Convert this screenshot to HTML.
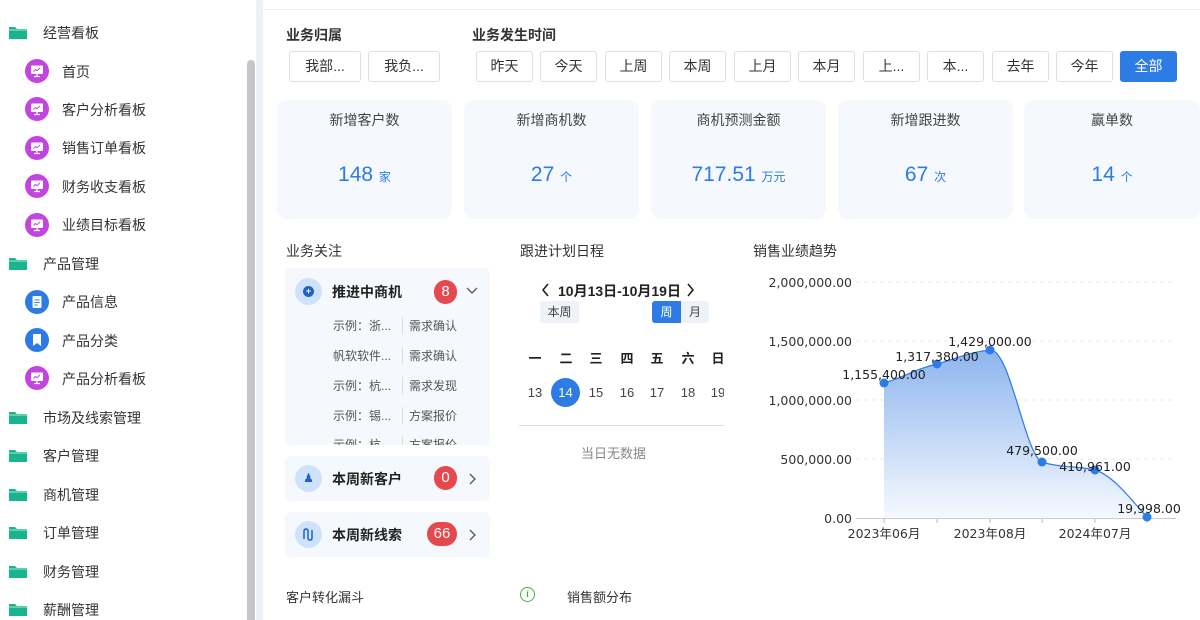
<!DOCTYPE html>
<html><head><meta charset="utf-8">
<style>
*{margin:0;padding:0;box-sizing:border-box}
body{width:1200px;height:620px;overflow:hidden;background:#fff;font-family:"Liberation Sans","Noto Sans CJK SC",sans-serif;color:#333;position:relative}
.a{position:absolute}
.side{left:0;top:0;width:256px;height:620px;background:#fff}
.mi{position:absolute;font-size:14px;color:#333;white-space:nowrap}
.fold{position:absolute;left:9px;width:18px;height:13px}
.ci{position:absolute;left:25px;width:24px;height:24px}
.btn{position:absolute;top:51px;height:31px;border:1px solid #dcdfe6;border-radius:3px;font-size:14px;color:#333;text-align:center;line-height:29px;background:#fff}
.card{position:absolute;top:100px;height:119px;background:#f5f8fd;border-radius:10px;text-align:center}
.card .t{margin-top:10px;font-size:14px;color:#444}
.card .v{margin-top:33px;font-size:21px;color:#2d7be5}
.card .v small{font-size:12px}
.h{position:absolute;font-size:14px;color:#333}
.box{position:absolute;left:285px;width:205px;background:#f5f8fd;border-radius:6px}
.badge{position:absolute;height:24px;border-radius:12px;background:#e5484d;color:#fff;font-size:15px;text-align:center;line-height:24px}
.row{position:absolute;font-size:12px;color:#555}
.dn{position:absolute;top:385px;font-size:13px;color:#444;width:30px;text-align:center}
.wk{position:absolute;top:348px;font-size:13px;font-weight:bold;color:#222;width:30px;text-align:center}
</style></head><body>
<svg width="0" height="0" style="position:absolute"><defs>
<symbol id="mon" viewBox="0 0 24 24"><circle cx="12" cy="12" r="12" fill="#c345e0"/><rect x="6" y="6.5" width="12" height="8.5" rx="1" fill="#fff"/><path d="M9 17.5h6M12 15v2.5" stroke="#fff" stroke-width="1.3"/><path d="M8.5 12.5l2-2 1.5 1.2 3-2.7" stroke="#c345e0" stroke-width="1" fill="none"/></symbol>
<symbol id="fd" viewBox="0 0 18 13"><path d="M0 1h6l2 2h10v10H0z" fill="#17b48e"/><path d="M0 4h18" stroke="#a7e6d4"/></symbol>
</defs></svg>
<div class="a side">
 <svg class="fold" style="top:26px"><use href="#fd"/></svg>
 <div class="mi" style="left:43px;top:23px">经营看板</div>
 <svg class="ci" style="top:59px"><use href="#mon"/></svg><div class="mi" style="left:62px;top:62px">首页</div>
 <svg class="ci" style="top:97px"><use href="#mon"/></svg><div class="mi" style="left:62px;top:100px">客户分析看板</div>
 <svg class="ci" style="top:136px"><use href="#mon"/></svg><div class="mi" style="left:62px;top:138px">销售订单看板</div>
 <svg class="ci" style="top:174px"><use href="#mon"/></svg><div class="mi" style="left:62px;top:177px">财务收支看板</div>
 <svg class="ci" style="top:213px"><use href="#mon"/></svg><div class="mi" style="left:62px;top:215px">业绩目标看板</div>
 <svg class="fold" style="top:257px"><use href="#fd"/></svg>
 <div class="mi" style="left:43px;top:254px">产品管理</div>
 <svg class="ci" style="top:290px" viewBox="0 0 24 24"><circle cx="12" cy="12" r="12" fill="#2d7be5"/><rect x="7.5" y="6" width="9" height="12" rx="1" fill="#fff"/><path d="M9.5 10h5M9.5 12.5h5M9.5 15h3" stroke="#2d7be5" stroke-width="1"/></svg><div class="mi" style="left:62px;top:292px">产品信息</div>
 <svg class="ci" style="top:328px" viewBox="0 0 24 24"><circle cx="12" cy="12" r="12" fill="#2d7be5"/><path d="M8 6h8v12l-4-3-4 3z" fill="#fff"/></svg><div class="mi" style="left:62px;top:331px">产品分类</div>
 <svg class="ci" style="top:366px"><use href="#mon"/></svg><div class="mi" style="left:62px;top:369px">产品分析看板</div>
 <svg class="fold" style="top:411px"><use href="#fd"/></svg><div class="mi" style="left:43px;top:408px">市场及线索管理</div>
 <svg class="fold" style="top:449px"><use href="#fd"/></svg><div class="mi" style="left:43px;top:446px">客户管理</div>
 <svg class="fold" style="top:488px"><use href="#fd"/></svg><div class="mi" style="left:43px;top:485px">商机管理</div>
 <svg class="fold" style="top:526px"><use href="#fd"/></svg><div class="mi" style="left:43px;top:523px">订单管理</div>
 <svg class="fold" style="top:565px"><use href="#fd"/></svg><div class="mi" style="left:43px;top:562px">财务管理</div>
 <svg class="fold" style="top:603px"><use href="#fd"/></svg><div class="mi" style="left:43px;top:600px">薪酬管理</div>
 <div class="a" style="left:247px;top:60px;width:8px;height:560px;background:#c4c6ca;border-radius:4px 4px 0 0"></div>
</div>
<div class="a" style="left:256px;top:0;width:7px;height:620px;background:#eef1f7"></div>
<div class="a" style="left:263px;top:9px;width:937px;height:1px;background:#eceef2"></div>

<div class="h" style="left:286px;top:25px;font-weight:bold">业务归属</div>
<div class="h" style="left:472px;top:25px;font-weight:bold">业务发生时间</div>
<div class="btn" style="left:289px;width:72px">我部...</div>
<div class="btn" style="left:368px;width:72px">我负...</div>
<div class="btn" style="left:476px;width:57px">昨天</div>
<div class="btn" style="left:540px;width:57px">今天</div>
<div class="btn" style="left:605px;width:57px">上周</div>
<div class="btn" style="left:669px;width:57px">本周</div>
<div class="btn" style="left:734px;width:57px">上月</div>
<div class="btn" style="left:798px;width:57px">本月</div>
<div class="btn" style="left:863px;width:57px">上...</div>
<div class="btn" style="left:927px;width:57px">本...</div>
<div class="btn" style="left:992px;width:57px">去年</div>
<div class="btn" style="left:1056px;width:57px">今年</div>
<div class="btn" style="left:1120px;width:57px;background:#2d7be5;border-color:#2d7be5;color:#fff">全部</div>

<div class="card" style="left:277px;width:175px"><div class="t">新增客户数</div><div class="v">148 <small>家</small></div></div>
<div class="card" style="left:464px;width:175px"><div class="t">新增商机数</div><div class="v">27 <small>个</small></div></div>
<div class="card" style="left:651px;width:175px"><div class="t">商机预测金额</div><div class="v">717.51 <small>万元</small></div></div>
<div class="card" style="left:838px;width:175px"><div class="t">新增跟进数</div><div class="v">67 <small>次</small></div></div>
<div class="card" style="left:1024px;width:176px"><div class="t">赢单数</div><div class="v">14 <small>个</small></div></div>

<div class="h" style="left:286px;top:241px">业务关注</div>
<div class="box" style="top:268px;height:177px;overflow:hidden">
 <div class="a" style="left:10px;top:10px;width:27px;height:27px;border-radius:50%;background:#cfe2fb"></div>
 <div class="a" style="left:18px;top:18px;width:11px;height:11px;border-radius:50%;background:#1f62c6;color:#fff;font-size:9px;line-height:11px;text-align:center;font-weight:bold">+</div>
 <div class="a" style="left:47px;top:14px;font-size:14px;font-weight:bold;color:#222">推进中商机</div>
 <div class="badge" style="left:149px;top:12px;width:23px">8</div>
 <svg class="a" style="left:181px;top:19px" width="12" height="8"><path d="M1 1l5 5 5-5" stroke="#555" fill="none" stroke-width="1.3"/></svg>
 <div class="row" style="left:48px;top:49px">示例：浙...</div><div class="row" style="left:117px;top:49px;border-left:1px solid #ddd;padding-left:6px">需求确认</div>
 <div class="row" style="left:48px;top:79px">帆软软件...</div><div class="row" style="left:117px;top:79px;border-left:1px solid #ddd;padding-left:6px">需求确认</div>
 <div class="row" style="left:48px;top:109px">示例：杭...</div><div class="row" style="left:117px;top:109px;border-left:1px solid #ddd;padding-left:6px">需求发现</div>
 <div class="row" style="left:48px;top:139px">示例：锡...</div><div class="row" style="left:117px;top:139px;border-left:1px solid #ddd;padding-left:6px">方案报价</div>
 <div class="row" style="left:48px;top:168px">示例：杭</div><div class="row" style="left:117px;top:168px;border-left:1px solid #ddd;padding-left:6px">方案报价</div>
</div>
<div class="box" style="top:456px;height:45px">
 <div class="a" style="left:10px;top:9px;width:27px;height:27px;border-radius:50%;background:#cfe2fb;color:#1f62c6;font-size:12px;text-align:center;line-height:27px">♟</div>
 <div class="a" style="left:47px;top:13px;font-size:14px;font-weight:bold;color:#222">本周新客户</div>
 <div class="badge" style="left:149px;top:10px;width:23px">0</div>
 <svg class="a" style="left:184px;top:17px" width="8" height="12"><path d="M1 1l5 5-5 5" stroke="#555" fill="none" stroke-width="1.3"/></svg>
</div>
<div class="box" style="top:512px;height:45px">
 <div class="a" style="left:10px;top:9px;width:27px;height:27px;border-radius:50%;background:#cfe2fb"></div>
 <svg class="a" style="left:17px;top:16px" width="13" height="13"><path d="M2 11V3q0-2 2-2t2 2v7q0 2 2 2t2-2V2" stroke="#1f62c6" fill="none" stroke-width="1.5"/></svg>
 <div class="a" style="left:47px;top:13px;font-size:14px;font-weight:bold;color:#222">本周新线索</div>
 <div class="badge" style="left:142px;top:10px;width:30px">66</div>
 <svg class="a" style="left:184px;top:17px" width="8" height="12"><path d="M1 1l5 5-5 5" stroke="#555" fill="none" stroke-width="1.3"/></svg>
</div>

<div class="h" style="left:520px;top:241px">跟进计划日程</div>
<svg class="a" style="left:541px;top:283px" width="9" height="14"><path d="M7 1L2 7l5 6" stroke="#222" fill="none" stroke-width="1.6"/></svg>
<div class="a" style="left:558px;top:281px;font-size:14px;font-weight:bold;color:#222">10月13日-10月19日</div>
<svg class="a" style="left:686px;top:283px" width="9" height="14"><path d="M2 1l5 6-5 6" stroke="#222" fill="none" stroke-width="1.6"/></svg>
<div class="a" style="left:540px;top:301px;width:39px;height:22px;background:#eef2f9;border-radius:3px;font-size:12px;text-align:center;line-height:22px;color:#444">本周</div>
<div class="a" style="left:652px;top:301px;width:29px;height:22px;background:#2d7be5;border-radius:3px 0 0 3px;font-size:12px;text-align:center;line-height:22px;color:#fff">周</div>
<div class="a" style="left:681px;top:301px;width:28px;height:22px;background:#eef2f9;border-radius:0 3px 3px 0;font-size:12px;text-align:center;line-height:22px;color:#444">月</div>
<div style="position:absolute;left:0;top:0;width:724px;height:620px;overflow:hidden">
<div class="wk" style="left:520px">一</div><div class="wk" style="left:551px">二</div><div class="wk" style="left:581px">三</div><div class="wk" style="left:612px">四</div><div class="wk" style="left:642px">五</div><div class="wk" style="left:673px">六</div><div class="wk" style="left:703px">日</div>
<div class="dn" style="left:520px">13</div>
<div class="a" style="left:551px;top:378px;width:29px;height:29px;border-radius:50%;background:#2d7be5;color:#fff;font-size:13px;text-align:center;line-height:29px">14</div>
<div class="dn" style="left:581px">15</div><div class="dn" style="left:612px">16</div><div class="dn" style="left:642px">17</div><div class="dn" style="left:673px">18</div><div class="dn" style="left:703px">19</div>
</div>
<div class="a" style="left:519px;top:425px;width:205px;height:1px;background:#ddd"></div>
<div class="a" style="left:581px;top:443px;font-size:13px;color:#888">当日无数据</div>

<div class="h" style="left:286px;top:587px;font-size:13px">客户转化漏斗</div>
<div class="a" style="left:520px;top:587px;width:15px;height:15px;border:1.5px solid #3bb54a;border-radius:50%;color:#3bb54a;font-size:9px;text-align:center;line-height:12px;font-weight:bold">i</div>
<div class="h" style="left:567px;top:587px;font-size:13px">销售额分布</div>

<div class="h" style="left:753px;top:241px">销售业绩趋势</div>
<svg class="a" style="left:740px;top:260px" width="460" height="300" viewBox="740 260 460 300">
<defs><linearGradient id="g" x1="0" y1="0" x2="0" y2="1"><stop offset="0" stop-color="#8db5ee"/><stop offset="1" stop-color="#f6f9fe"/></linearGradient></defs>
<g stroke="#e8e8e8" stroke-dasharray="4 4"><line x1="856" y1="282" x2="1176" y2="282"/><line x1="856" y1="341" x2="1176" y2="341"/><line x1="856" y1="400" x2="1176" y2="400"/><line x1="856" y1="459" x2="1176" y2="459"/></g>
<path d="M884 383 C905 377 915 369 937 364 C958 358 970 352 990 350 C1010 348 1025 455 1042 462 C1060 468 1080 466 1095 470 C1115 476 1135 505 1147 517 L1147 518 L884 518Z" fill="url(#g)"/>
<path d="M884 383 C905 377 915 369 937 364 C958 358 970 352 990 350 C1010 348 1025 455 1042 462 C1060 468 1080 466 1095 470 C1115 476 1135 505 1147 517" fill="none" stroke="#2d7be5" stroke-width="1.2"/>
<line x1="856" y1="518.5" x2="1176" y2="518.5" stroke="#ccc"/>
<g stroke="#bbb"><line x1="884" y1="519" x2="884" y2="523"/><line x1="937" y1="519" x2="937" y2="523"/><line x1="990" y1="519" x2="990" y2="523"/><line x1="1042" y1="519" x2="1042" y2="523"/><line x1="1095" y1="519" x2="1095" y2="523"/><line x1="1147" y1="519" x2="1147" y2="523"/></g>
<g fill="#2d7be5"><circle cx="884" cy="383" r="4.5"/><circle cx="937" cy="364" r="4.5"/><circle cx="990" cy="350" r="4.5"/><circle cx="1042" cy="462" r="4.5"/><circle cx="1095" cy="470" r="4.5"/><circle cx="1147" cy="517" r="4.5"/></g>
<g font-family="DejaVu Sans, sans-serif" font-size="12.5" fill="#333" text-anchor="end">
<text x="852" y="287">2,000,000.00</text><text x="852" y="346">1,500,000.00</text><text x="852" y="405">1,000,000.00</text><text x="852" y="464">500,000.00</text><text x="852" y="523">0.00</text></g>
<g font-family="DejaVu Sans, sans-serif" font-size="12.5" fill="#222" text-anchor="middle">
<text x="884" y="379">1,155,400.00</text><text x="937" y="361">1,317,380.00</text><text x="990" y="346">1,429,000.00</text><text x="1042" y="455">479,500.00</text><text x="1095" y="471">410,961.00</text><text x="1149" y="513">19,998.00</text></g>
<g font-family="DejaVu Sans, 'Noto Sans CJK SC', sans-serif" font-size="12.5" fill="#333" text-anchor="middle">
<text x="884" y="538">2023年06月</text><text x="990" y="538">2023年08月</text><text x="1095" y="538">2024年07月</text></g>
</svg>
</body></html>
